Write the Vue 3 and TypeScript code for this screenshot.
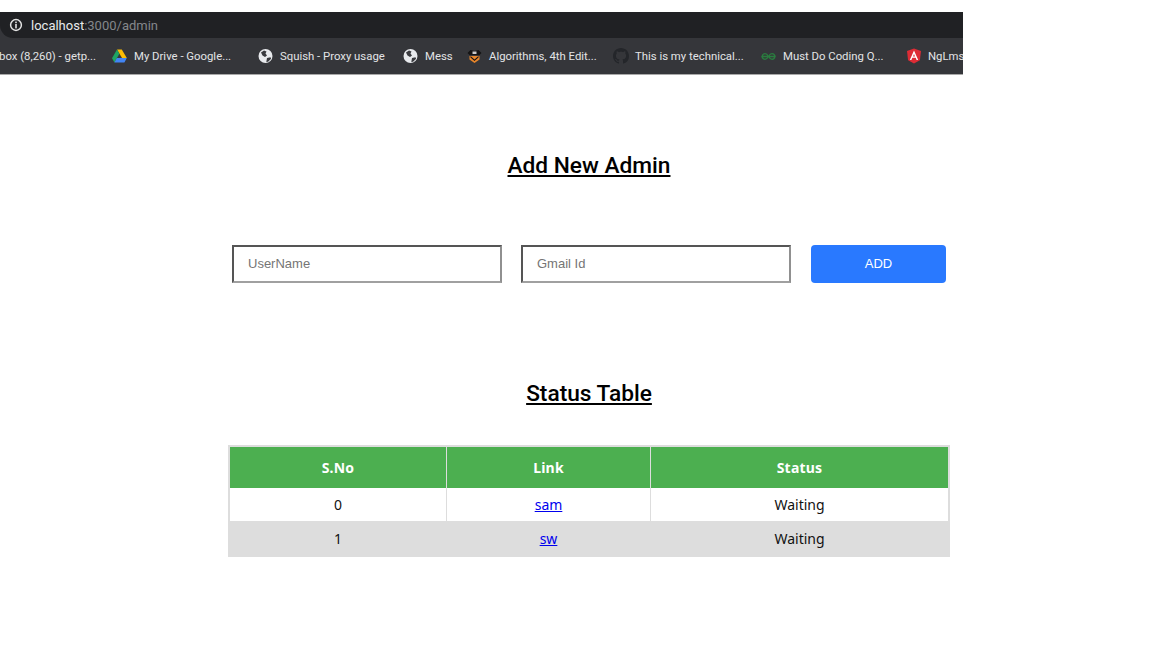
<script setup lang="ts">
interface Bookmark { label: string; icon: string; width: number }
const bookmarks: Bookmark[] = [
  { label: 'My Drive - Google...', icon: 'drive', width: 146 },
  { label: 'Squish - Proxy usage', icon: 'globe', width: 145 },
  { label: 'Mess', icon: 'globe', width: 64 },
  { label: 'Algorithms, 4th Edit...', icon: 'algo', width: 146 },
  { label: 'This is my technical...', icon: 'github', width: 148 },
  { label: 'Must Do Coding Q...', icon: 'gfg', width: 145 },
  { label: 'NgLms', icon: 'angular', width: 80 },
]
const rows = [
  { id: 0, link: 'sam', status: 'Waiting' },
  { id: 1, link: 'sw', status: 'Waiting' },
]
</script>

<template>
  <div class="page">
    <header class="browser">
      <div class="urlbar">
        <svg class="info" viewBox="0 0 14 14" width="14" height="14">
          <circle cx="7" cy="7" r="5.4" fill="none" stroke="#e3e3e3" stroke-width="1.5" />
          <rect x="6.2" y="3.6" width="1.6" height="1.6" fill="#e3e3e3" />
          <rect x="6.2" y="6" width="1.6" height="4.4" fill="#e3e3e3" />
        </svg>
        <span class="host">localhost</span><span class="path">:3000/admin</span>
      </div>
      <nav class="bookmarks">
        <div class="first"><span>Inbox (8,260) - getp...</span></div>
        <div v-for="b in bookmarks" :key="b.label" class="mark" :style="{ width: b.width + 'px' }">
          <svg class="ico" viewBox="0 0 16 16" width="16" height="16">
            <template v-if="b.icon === 'drive'">
              <path d="M5 1.5h4.800l5 8.600H10z" fill="#fbbc04" />
              <path d="M5 1.5 0 10.200 2.400 14.400l5-8.600z" fill="#1fa463" />
              <path d="M2.400 14.400h10l2.400-4.300H4.800z" fill="#4285f4" />
            </template>
            <template v-else-if="b.icon === 'globe'">
              <circle cx="7.500" cy="8" r="7" fill="#e8eaed" />
              <path d="M3 4.500 6 2.600 8.500 3.400 7.500 5.500 9 7.500 7 9 4.500 7.500zM9 10l3.500-.8.600 1.600-3 3-1.800.3z" fill="#3a3b3f" />
            </template>
            <template v-else-if="b.icon === 'algo'">
              <path d="M2.500 8h10v3.500L7.500 15 2.500 11.500z" fill="#e8862a" />
              <path d="M.5 5l3-3 4 1 4-1 3 3-2 2h-10z" fill="#141414" />
              <path d="M5.500 3.500h4V6h-4z" fill="#c9c9c9" />
              <path d="M3.500 8l4 3.500 4-3.500v1.500L7.500 13l-4-3.500z" fill="#141414" />
            </template>
            <template v-else-if="b.icon === 'github'">
              <path d="M8 0C3.580 0 0 3.580 0 8c0 3.540 2.290 6.530 5.470 7.590.4.070.55-.17.55-.38 0-.19-.01-.82-.01-1.490-2.010.37-2.530-.49-2.690-.94-.09-.23-.48-.94-.82-1.130-.28-.15-.68-.52-.01-.53.63-.01 1.080.58 1.230.82.72 1.210 1.870.87 2.330.66.070-.52.28-.87.51-1.070-1.780-.2-3.640-.89-3.640-3.950 0-.87.31-1.590.82-2.150-.08-.2-.36-1.020.08-2.120 0 0 .67-.21 2.200.82.64-.18 1.320-.27 2-.27.68 0 1.360.09 2 .27 1.530-1.040 2.200-.82 2.200-.82.44 1.100.16 1.920.08 2.120.51.56.82 1.270.82 2.150 0 3.070-1.870 3.750-3.650 3.950.29.25.54.73.54 1.480 0 1.070-.01 1.930-.01 2.200 0 .21.15.46.55.38A8.013 8.013 0 0016 8c0-4.420-3.580-8-8-8z" fill="#24262a" />
            </template>
            <template v-else-if="b.icon === 'gfg'">
              <g fill="none" stroke="#2a7d3f" stroke-width="1.300">
                <path d="M7.500 8.500H1C1.500 6.500 2.700 5.700 4 5.700 5.300 5.700 6.500 6.800 7.500 8.500 8.500 10.200 9.700 11.300 11 11.300 12.300 11.300 13.500 10.500 14 8.500H7.500" />
                <path d="M7.500 8.500C6.500 10.200 5.300 11.300 4 11.300 2.700 11.300 1.500 10.500 1 8.500M7.500 8.500C8.500 6.800 9.700 5.700 11 5.700 12.300 5.700 13.500 6.500 14 8.500" />
              </g>
            </template>
            <template v-else>
              <path d="M8 .5 15 3l-1.100 9.300L8 15.500 2.100 12.300 1 3z" fill="#dd2c35" />
              <path d="M8 2.500 3.800 12h1.600l.9-2.200h3.400l.9 2.200h1.600zM7 8.400l1-2.500 1 2.500z" fill="#fff" />
            </template>
          </svg>
          <span class="mark-text">{{ b.label }}</span>
        </div>
      </nav>
    </header>

    <main class="content">
      <h1 class="title first-title">Add New Admin</h1>
      <form class="form" @submit.prevent>
        <input class="field" type="text" placeholder="UserName" />
        <input class="field" type="text" placeholder="Gmail Id" />
        <button class="add" type="button">ADD</button>
      </form>
      <h1 class="title second-title">Status Table</h1>
      <table class="status">
        <thead>
          <tr>
            <th class="col-a">S.No</th>
            <th class="col-b">Link</th>
            <th>Status</th>
          </tr>
        </thead>
        <tbody>
          <tr v-for="r in rows" :key="r.id">
            <td>{{ r.id }}</td>
            <td><a href="#" @click.prevent>{{ r.link }}</a></td>
            <td>{{ r.status }}</td>
          </tr>
        </tbody>
      </table>
    </main>
  </div>
</template>

<style>
html, body { margin: 0; background: #fff; }
</style>

<style scoped>
.page {
  width: 1152px;
  height: 648px;
  overflow: hidden;
  background: #fff;
  padding-top: 12px;
  box-sizing: border-box;
  font-family: Roboto, "Liberation Sans", sans-serif;
}
.browser {
  width: 963px;
  height: 63px;
  background: #35363a;
  border-bottom: 1px solid #a9a9a9;
  box-sizing: border-box;
  overflow: hidden;
}
.urlbar {
  height: 26px;
  background: #202124;
  border-bottom-left-radius: 13px;
  display: flex;
  align-items: center;
  padding-left: 9px;
  font-size: 13px;
}
.info { margin-right: 8px; }
.host { color: #e8eaed; }
.path { color: #84878b; }
.bookmarks {
  height: 36px;
  display: flex;
  align-items: center;
  white-space: nowrap;
  font-size: 11.35px;
  color: #e3e4e6;
}
.first {
  width: 112px;
  flex: none;
  padding-right: 16px;
  box-sizing: border-box;
  display: flex;
  justify-content: flex-end;
  overflow: hidden;
}
.first span { flex: none; }
.mark { flex: none; display: flex; align-items: center; gap: 6px; box-sizing: border-box; }
.ico { flex: none; }
.mark-text { display: block; }

.content {
  width: 722px;
  margin-left: 228px;
  display: flex;
  flex-direction: column;
  align-items: stretch;
}
.title {
  margin: 0;
  text-align: center;
  font-size: 22.7px;
  line-height: 28px;
  font-weight: 500;
  color: #000;
  text-decoration: underline;
}
.first-title { margin-top: 77px; }
.second-title { margin-top: 97px; }
.form {
  margin-top: 65px;
  padding-left: 4px;
  display: flex;
  gap: 19px;
  height: 38px;
}
.field {
  width: 270px;
  height: 38px;
  box-sizing: border-box;
  border: 2px solid;
  border-color: #555 #909090 #a0a0a0 #555;
  padding: 0 14px 2px;
  font: 13px "Liberation Sans", Arial, sans-serif;
  outline: none;
  background: #fff;
}
.field::placeholder { color: #757575; opacity: 1; }
.add {
  width: 135px;
  height: 38px;
  margin-left: 1px;
  border: 0;
  border-radius: 4px;
  background: #2979ff;
  color: #fff;
  padding: 0 0 2px;
  font: 13px "Liberation Sans", Arial, sans-serif;
}
.status {
  margin-top: 37px;
  width: 722px;
  border-collapse: collapse;
  border: 2px solid #ddd;
  font-family: "Noto Sans", "DejaVu Sans", sans-serif;
  font-size: 14px;
  color: #111;
  table-layout: fixed;
}
.col-a { width: 216px; }
.col-b { width: 203px; }
.status th {
  height: 41px;
  padding: 0;
  background: #4caf50;
  color: #fff;
  font-weight: 700;
  letter-spacing: 0.2px;
  border: 1px solid #ddd;
  border-top: 0;
  border-bottom: 0;
}
.status td {
  height: 33px;
  padding: 0;
  text-align: center;
  border-left: 1px solid #ddd;
  border-right: 1px solid #ddd;
}
.status tbody tr:nth-child(even) td { background: #ddd; height: 34px; }
.status a { color: #0000ee; text-decoration: underline; }
</style>
